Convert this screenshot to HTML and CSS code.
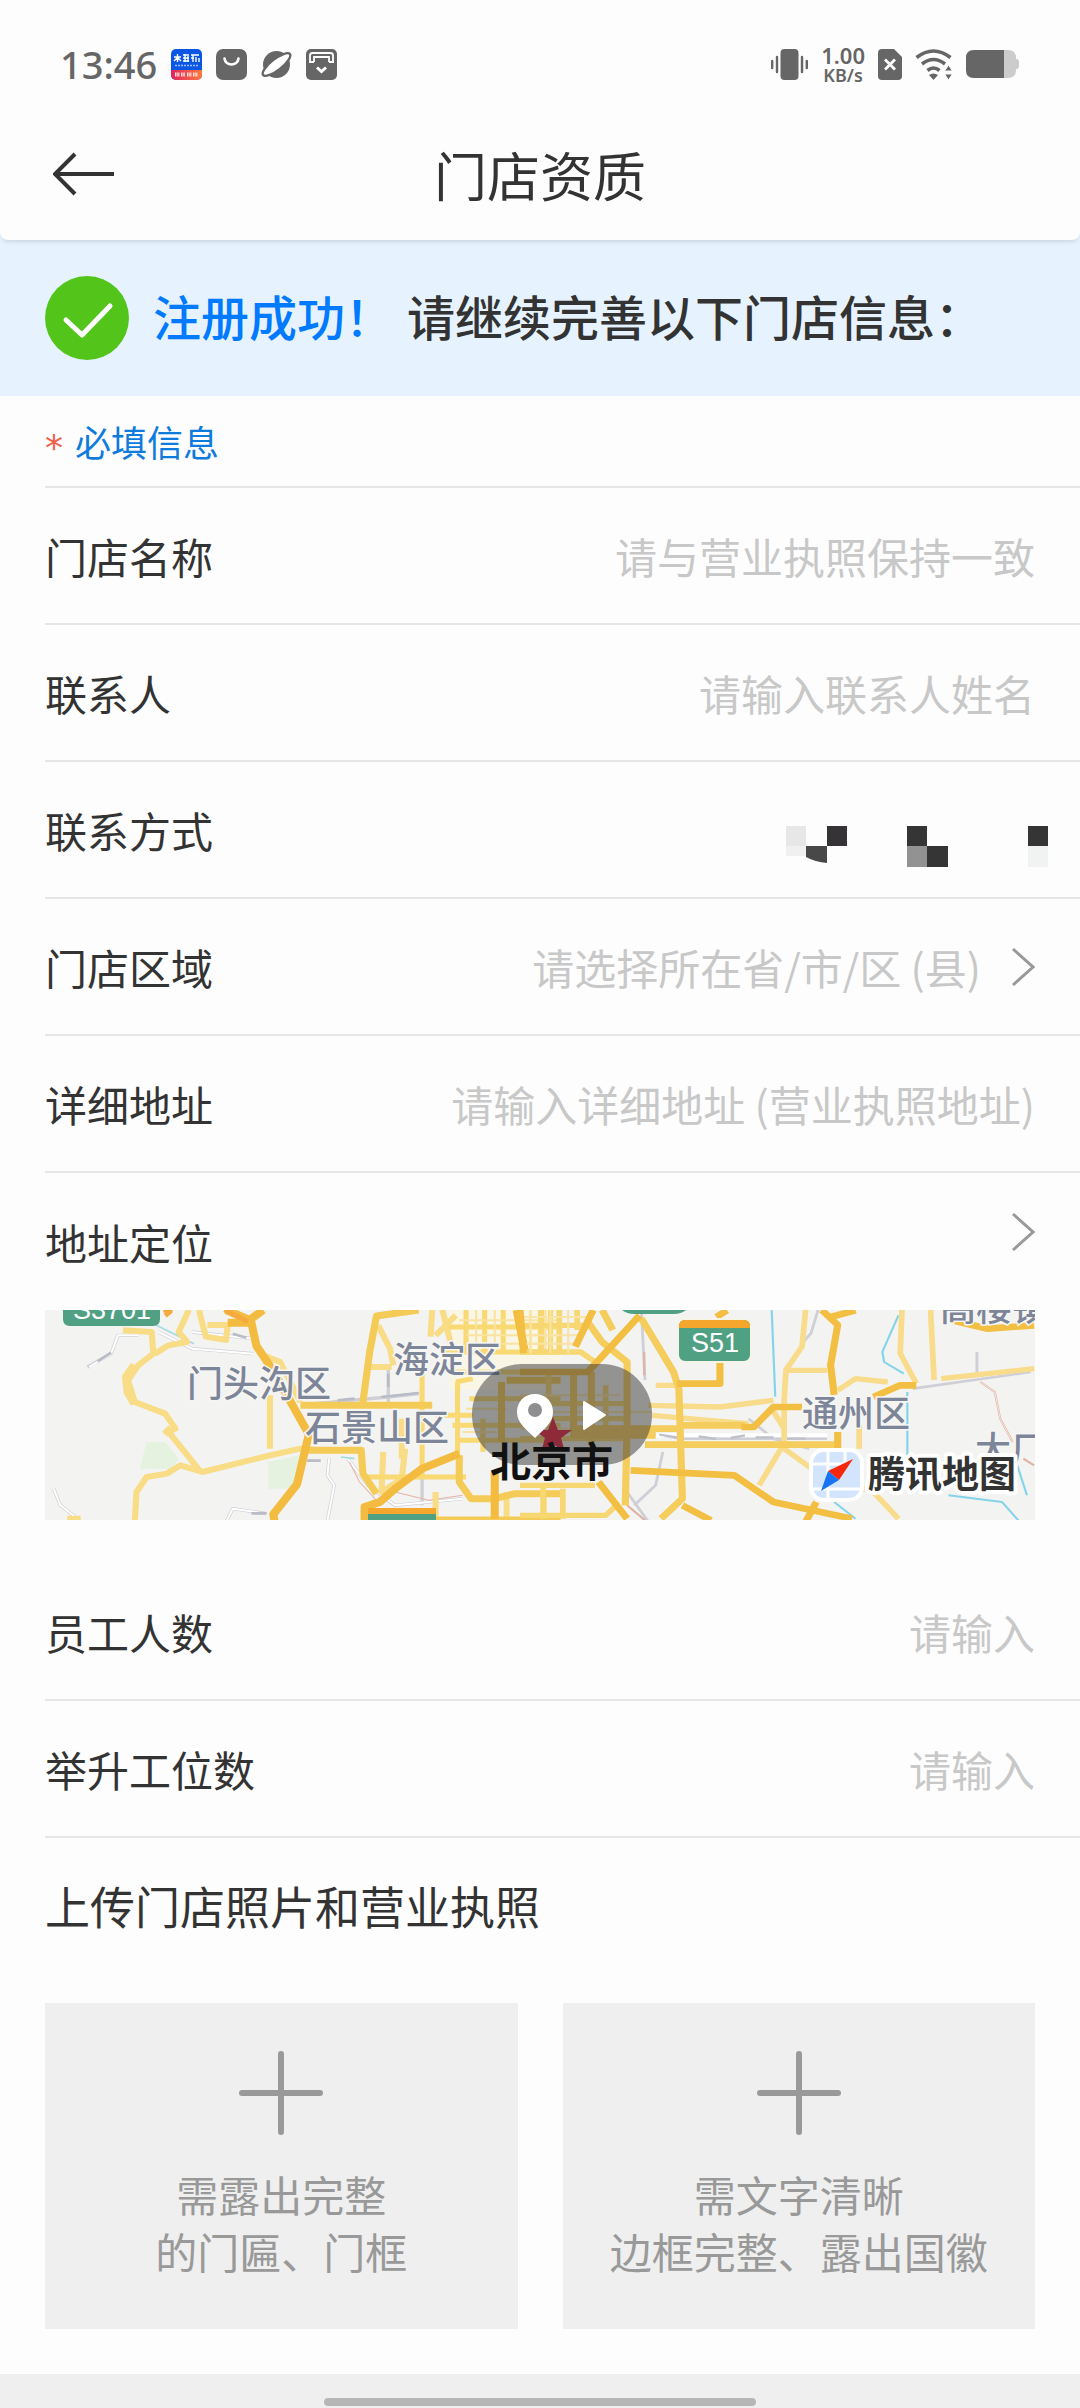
FILE: index.html
```html
<!DOCTYPE html>
<html lang="zh-CN">
<head>
  <meta charset="UTF-8">
  <meta name="viewport" content="width=device-width, initial-scale=1.0">
  <title>门店资质</title>
  <link rel="stylesheet" href="styles.css">
</head>
<body>
<div class="status-bar">
  <div class="status-left">
    <span class="time">13:46</span>
    <svg width="31" height="31" viewBox="0 0 31 31">
      <defs>
        <linearGradient id="appRed" x1="0" x2="1"><stop offset="0" stop-color="#e0245e"/><stop offset="1" stop-color="#ff7a3c"/></linearGradient>
        <clipPath id="appClip"><rect width="31" height="31" rx="5"/></clipPath>
      </defs>
      <g clip-path="url(#appClip)">
        <rect width="31" height="31" fill="#0b57e3"/>
        <rect y="21" width="31" height="10" fill="url(#appRed)"/>
      </g>
      <path d="M3 8h7M6.500 5v8M6 9l-3 3M7 9l3 3M12 6h6M12 9h6M12 12h6M14 5v8M17 7v6M20 6h8M20 9h3M25 8v5M22 6v7M28 9v4" stroke="#fff" stroke-width="1.400" fill="none"/>
      <path d="M4 16.500h23" stroke="#9cc0ff" stroke-width="1.500" stroke-dasharray="2 1"/>
      <path d="M4 25.500h5M10 25.500h4M16 25.500h5M22 25.500h5" stroke="#ffe1dc" stroke-width="4" stroke-dasharray="1.500 .8"/>
    </svg>
    <svg width="31" height="31" viewBox="0 0 31 31">
      <rect width="31" height="31" rx="7" fill="#666"/>
      <path d="M8.500 9.500c1 8 13 8 14 0" fill="none" stroke="#fff" stroke-width="2.600" stroke-linecap="round"/>
    </svg>
    <svg width="31" height="31" viewBox="0 0 31 31">
      <circle cx="15.500" cy="15.500" r="13.500" fill="#666"/>
      <ellipse cx="15.500" cy="15.500" rx="17" ry="5.500" transform="rotate(-38 15.500 15.500)" fill="#fff" stroke="#666" stroke-width="2.400"/>
    </svg>
    <svg width="31" height="31" viewBox="0 0 31 31">
      <rect width="31" height="31" rx="5" fill="#666"/>
      <path d="M4 13V6.500Q4 4 6.500 4h18Q27 4 27 6.500V13M8 13V8h15v5M3 13h5M23 13h5" fill="none" stroke="#fff" stroke-width="1.800"/>
      <path d="M11 18.500l4.500 4 4.500-4" fill="none" stroke="#fff" stroke-width="3"/>
    </svg>
  </div>
  <div class="status-right">
    <svg width="37" height="31" viewBox="0 0 37 31">
      <rect x="9.500" width="18" height="31" rx="4" fill="#666"/>
      <path d="M1.200 12v7M6 8v15M31 8v15M35.800 12v7" stroke="#666" stroke-width="2.400" stroke-linecap="round"/>
    </svg>
    <div class="speed"><b>1.00</b><span>KB/s</span></div>
    <svg width="24" height="31" viewBox="0 0 24 31">
      <path d="M4 0h12l8 8v19q0 4-4 4H4q-4 0-4-4V4q0-4 4-4z" fill="#666"/>
      <path d="M7 10.500l10 10M17 10.500l-10 10" stroke="#fff" stroke-width="2.800"/>
    </svg>
    <svg width="38" height="31" viewBox="0 0 38 31">
      <path d="M1.500 8.500q17-13 34 0M7 15q11.500-9 23 0M12.500 21.500q6-5 12 0" fill="none" stroke="#666" stroke-width="3.600"/>
      <path d="M14 26q4.500-3 9 0l-4.500 5z" fill="#666"/>
      <path d="M33.500 16l4 6h-8zM33.500 31l4-6h-8z" fill="#666" stroke="#fdfdfd" stroke-width="1"/>
    </svg>
    <svg width="54" height="28" viewBox="0 0 54 28">
      <path d="M8 0h34q8 0 8 8v1q3 0 3 3v4q0 3-3 3v1q0 8-8 8H8q-8 0-8-8V8q0-8 8-8z" fill="#ccc"/>
      <path d="M8 0h30v28H8q-8 0-8-8V8q0-8 8-8z" fill="#666"/>
    </svg>
  </div>
</div>

<header class="nav">
  <button type="button" class="back" aria-label="返回">
    <svg width="62" height="44" viewBox="0 0 62 44"><path d="M22 2L2 22l20 20M2 22h59" fill="none" stroke="#333" stroke-width="4"/></svg>
  </button>
  <h1>门店资质</h1>
</header>

<div class="banner">
  <svg width="84" height="84" viewBox="0 0 84 84">
    <circle cx="42" cy="42" r="42" fill="#52c41a"/>
    <path d="M21 44l16 15 28-29" fill="none" stroke="#fff" stroke-width="5" stroke-linecap="round" stroke-linejoin="round"/>
  </svg>
  <p><strong>注册成功！</strong><span>请继续完善以下门店信息：</span></p>
</div>

<form class="store-form">
  <p class="required"><span>*</span>必填信息</p>
  <div class="row">
    <label for="storeName">门店名称</label>
    <input type="text" id="storeName" name="storeName" placeholder="请与营业执照保持一致">
  </div>
  <div class="row">
    <label for="contact">联系人</label>
    <input type="text" id="contact" name="contact" placeholder="请输入联系人姓名">
  </div>
  <div class="row row-phone">
    <span>联系方式</span>
    <!-- masked phone number -->
    <svg width="262" height="74" viewBox="0 0 262 74" role="img" aria-label="手机号已隐藏">
      <rect y="33" width="20" height="20" fill="#e7e7e7"/>
      <rect y="53" width="20" height="10" fill="#f0f0f0"/>
      <path d="M20 53h21v17q-12-1-21-6z" fill="#484848"/>
      <rect x="41" y="33" width="20" height="20" fill="#353335"/>
      <rect x="121" y="33" width="20" height="20" fill="#353535"/>
      <rect x="121" y="53" width="20" height="21" fill="#929292"/>
      <rect x="141" y="53" width="21" height="21" fill="#353535"/>
      <rect x="242" y="33" width="20" height="20" fill="#353535"/>
      <rect x="242" y="53" width="20" height="21" fill="#f0f3f2"/>
    </svg>
  </div>
  <div class="row">
    <label for="region">门店区域</label>
    <select id="region" name="region">
      <option value="">请选择所在省/市/区 (县)</option>
    </select>
    <svg class="arrow" width="24" height="40" viewBox="0 0 24 40"><path d="M2 2l20 18L2 38" fill="none" stroke="#999" stroke-width="3"/></svg>
  </div>
  <div class="row">
    <label for="address">详细地址</label>
    <input type="text" id="address" name="address" placeholder="请输入详细地址 (营业执照地址)">
  </div>
  <div class="row row-location">
    <span>地址定位</span>
    <button type="button" aria-label="选择定位">
      <svg width="24" height="40" viewBox="0 0 24 40"><path d="M2 2l20 18L2 38" fill="none" stroke="#999" stroke-width="3"/></svg>
    </button>
  </div>

  <div class="map">
    <svg viewBox="0 0 990 210" preserveAspectRatio="xMidYMid slice" role="img" aria-label="北京市地图">
      <rect width="990" height="210" fill="#f3f3f1"/>
      <!-- west side -->
      <g transform="translate(-15 -18) scale(.338 .3333)" fill="none" stroke-linejoin="round">
        <path d="M325 530L345 450 400 450 440 500 420 530zM705 590V510L800 490 780 590z" fill="#e5f2df"/>
        <path d="M1240 54h330v240h-330z" fill="#faf6e6"/>
        <path d="M170 225L240 185 260 130 320 130M380 120L480 170 660 185M480 120l180 20M70 590l20 50 50 40M580 690l20-40 100 15M885 500l-5 50 20 30-20 105M840 335l220-20 90-10M1060 230v100M940 500l60 80 80 60 200-20M1160 560v80" stroke="#cfcfd6" stroke-width="10"/>
        <path d="M175 225L240 185 260 130 320 130M380 120L480 170 660 185M480 120l180 20M70 590l20 50 50 40M580 690l20-40 100 15M885 500l-5 50 20 30-20 105M940 500l60 80 80 60 200-20" stroke="#fff" stroke-width="6"/>
        <path d="M200 208l40-26M600 125l40 12M910 325l50-5M1040 315l110-12M655 664h45M1060 245v40M820 506h40" stroke="#b9bcc6" stroke-width="8"/>
        <path d="M945 510l30 60 50 55M1080 600l100 25 100-15" stroke="#e5b3a8" stroke-width="3"/>
        <path d="M920 495l40 5M365 95l120 60" stroke="#a4dbe0" stroke-width="5"/>
        <path d="M275 115L360 120 365 185 320 220 290 265 310 330 400 365 430 410 410 420 505 540M370 185L410 160 465 150 440 120 470 54M500 54l20 80 60 10 5-45h-60M310 690l5-90 30-45 60-10 40-25 65 20 200-50 90-20 60 5M710 310v160M690 190l50 20 60 120M1030 100l35 70 10 50M990 225h80M1045 480l-5 120 60-40 10-90M1100 380v120M1190 54l-5 80M1220 54l30 120M1200 130l60-60M1520 600v90M1200 600v90M1410 600v90M110 680h40" stroke="#f9dc86" stroke-width="18"/>
        <path d="M310 220l-25 35 5 45 20 35M400 410l15 15" stroke="#f9dc86" stroke-width="26"/>
        <path d="M1240 105h330M1220 180h350M1240 240h330M1250 400h320M1260 445h310M1290 54v130M1345 54v130M1400 54v130M1510 54v130M1540 54v130M1265 270v220M1310 260l-50 10M1340 380v100M1000 555h290M1160 230v330M1300 320h270M1200 370h110" stroke="#f8d972" stroke-width="15"/>
        <path d="M1270 85h300M1290 130h280M1290 155h280M1320 54v130M1375 54v130M1480 54v130M1525 54v130M1280 420h100M1290 350h120" stroke="#f9e3a0" stroke-width="6"/>
        <path d="M1150 54L1025 72 1005 180 985 330M800 340h390M820 475h160l5 70 40 60M1270 490v80l35 50h70l60-15h135M980 684h590M1395 270v180M1570 265h-160" stroke="#f5cb57" stroke-width="21"/>
        <path d="M580 54l70 30 40-30M585 92h70l15 70 50 75 105 190-35 150-70 90 5 30M1270 485l-110 45-80 60-45 40-45 15v45M1440 54l25 130M1375 540v140" stroke="#f3bc40" stroke-width="24"/>
        <path d="M395 54l20 5-15 12M575 54l70 35" stroke="#f6a93c" stroke-width="14"/>
      </g>
      <!-- east side -->
      <g transform="translate(475 -18) scale(.357 .3333)" fill="none" stroke-linejoin="round">
        <path d="M340 54l10 210M835 54l-20 70-25 30M370 425l80 15h410M320 640l60-60 20-100M300 600l60 90M1280 180v60M1100 290l330-50M640 380l70 60 100 30" stroke="#cfcfd8" stroke-width="8"/>
        <path d="M380 430h480" stroke="#fff" stroke-width="12"/>
        <path d="M390 428l50 8M500 433l50 8M590 438l40-8M660 436h50M740 440h60" stroke="#bec1ca" stroke-width="7"/>
        <path d="M348 180v70M1290 270l40 30 15 80 35 70M300 640l50 45M1410 500l30 20" stroke="#dfb2a5" stroke-width="6"/>
        <path d="M1290 270l40 30 15 80 35 70" stroke="#fff" stroke-width="2"/>
        <path d="M705 54l10 260M1060 70l-45 110 5 30 55 35M1085 300v190M1200 610l150 20 50 60M880 630l60 50M1390 510l30 100" stroke="#83d4ea" stroke-width="6"/>
        <path d="M800 54l-10 110-45 70-5 90v130L670 580M750 235h110M1070 54l-5 130 45 90M1150 54l10 210M1180 260l260-30M890 295l50-35 90 10M360 340l200 5 150-20M380 280h60M370 370l160 15 110 10M740 470l90 70 160 60 70 80M950 400v70M705 350l35 60" stroke="#f8dc8b" stroke-width="16"/>
        <path d="M0 100h180M0 180h170l40 30M0 240h200M0 380h300M0 440h300M60 54v130M110 54v130M160 54v60M80 240v200M240 280v160M0 580h210M0 670h240l30-30M65 580v100M120 590v90M0 335h300" stroke="#f7d772" stroke-width="16"/>
        <path d="M0 75h190M0 130h180M0 155h170M30 54v130M85 54v130M135 54v130M0 410h270M0 310h280M0 360h370" stroke="#f9e4a5" stroke-width="6"/>
        <path d="M190 90l40 60 70 60v190l-5 240M230 54l30 60M340 80l90 160 15 50 10 330-60 60M160 410h290M200 240v220M350 458h540M150 240v190h230M450 400h180" stroke="#f5cd5c" stroke-width="20"/>
        <path d="M0 240h190L335 70M205 54l-50 110M0 54l10 130M220 570l80 110M310 535l290 15 110 80 220 50M800 690l30-60M440 275h120v-80M550 75l30-20M620 405h35l55-60h80M455 640l80 45M845 54l45 45-20 120 10 90M890 420v50M870 75l70-20M990 315l75-35h45M1210 85l100 25 130-10" stroke="#f3bf43" stroke-width="20"/>
      </g>

      <path d="M18 0h97v9q0 7-7 7H25q-7 0-7-7z" fill="#50a184"/>
      <text x="28" y="9" class="road-no">S3701</text>
      <path d="M577 0h64q-5 4-12 4h-40q-7 0-12-4z" fill="#50a184"/>
      <path d="M323 198h68v12h-68z" fill="#50a184"/>
      <path d="M323 198h68v6h-68z" fill="#f5a62d"/>
      <rect x="633" y="9" width="73" height="43" rx="7" fill="#50a184" stroke="#f6f4e6" stroke-width="2"/>
      <path d="M634 18v-2q0-6 6-6h59q6 0 6 6v2z" fill="#f5a62d"/>
      <text x="646" y="42" class="road-no">S51</text>

      <text x="142" y="87" class="district">门头沟区</text>
      <text x="348" y="63" class="district">海淀区</text>
      <text x="260" y="131" class="district">石景山区</text>
      <text x="757" y="117" class="district">通州区</text>
      <text x="895" y="11" class="district">高楼镇</text>
      <text x="930" y="153" class="district">大厂</text>

      <path d="M508 107l5 13h14l-11 8 4 14-12-8-12 8 4-14-11-8h14z" fill="#e8213f"/>
      <rect x="427" y="54" width="180" height="101" rx="50" fill="#333" fill-opacity=".5"/>
      <path d="M490 84c-11 0-18 8-18 18 0 11 9 17 18 26 9-9 18-15 18-26 0-10-7-18-18-18z" fill="#fff"/>
      <circle cx="490" cy="100" r="7" fill="#8e8e90"/>
      <path d="M539 92l21 13-21 14z" fill="#fff" stroke="#fff" stroke-width="2" stroke-linejoin="round"/>
      <text x="445" y="167" class="city">北京市</text>

      <rect x="766" y="140" width="51" height="50" rx="13" fill="#d3e5fd" stroke="#fff" stroke-width="4"/>
      <path d="M783 142v46M768 154h32M768 179h47M800 142v12" stroke="#fff" stroke-width="3"/>
      <path d="M808 149l-14 21-11-9z" fill="#f5260c"/>
      <path d="M776 181l7-20 11 9z" fill="#1674f5"/>
      <text x="823" y="178" class="brand">腾讯地图</text>
    </svg>
  </div>

  <div class="row">
    <label for="staff">员工人数</label>
    <input type="text" id="staff" name="staff" placeholder="请输入">
  </div>
  <div class="row">
    <label for="lifts">举升工位数</label>
    <input type="text" id="lifts" name="lifts" placeholder="请输入">
  </div>

  <h2>上传门店照片和营业执照</h2>
  <div class="uploads">
    <button type="button">
      <svg width="84" height="84" viewBox="0 0 84 84"><path d="M42 3v78M3 42h78" stroke="#999" stroke-width="6" stroke-linecap="round"/></svg>
      <span>需露出完整<br>的门匾、门框</span>
    </button>
    <button type="button">
      <svg width="84" height="84" viewBox="0 0 84 84"><path d="M42 3v78M3 42h78" stroke="#999" stroke-width="6" stroke-linecap="round"/></svg>
      <span>需文字清晰<br>边框完整、露出国徽</span>
    </button>
  </div>
</form>

<div class="home-bar"><span></span></div>
</body>
</html>
```
FILE: styles.css
```css
* {
  box-sizing: border-box;
}

body {
  display: flex;
  flex-direction: column;
  min-height: 100vh;
  margin: 0;
  background-color: #fdfdfd;
  color: #333;
  font-family: "Noto Sans CJK SC", sans-serif;
  font-size: 42px;
}

svg {
  display: block;
  flex-shrink: 0;
}

button, input, select {
  padding: 0;
  border: none;
  background: none;
  font-family: inherit;
  font-size: inherit;
  color: inherit;
}

button {
  cursor: pointer;
}

/* status bar */
.status-bar {
  display: flex;
  justify-content: space-between;
  align-items: center;
  height: 108px;
  padding: 20px 60px 0;
  color: #666;
  font-family: "Noto Sans", sans-serif;
}

.status-left {
  display: flex;
  align-items: center;
  gap: 14px;
}

.time {
  font-size: 38px;
  font-weight: 500;
  line-height: 40px;
}

.status-right {
  display: flex;
  align-items: center;
  gap: 13px;
}

.speed {
  display: flex;
  flex-direction: column;
  align-items: center;
  font-size: 18px;
  font-weight: 600;
  line-height: 18px;
}

.speed b {
  font-size: 22px;
  font-weight: 600;
  line-height: 22px;
}

/* title bar */
.nav {
  display: grid;
  grid-template-columns: 1fr auto 1fr;
  align-items: center;
  height: 132px;
  padding: 0 53px;
  background-color: #fdfdfd;
  border-radius: 0 0 8px 8px;
  box-shadow: 0 4px 4px -2px rgba(0, 0, 0, 0.12);
  z-index: 1;
}

.back {
  justify-self: start;
}

h1 {
  margin: 0;
  font-size: 53px;
  font-weight: 400;
  line-height: 80px;
}

.banner {
  display: flex;
  align-items: center;
  gap: 24px;
  height: 164px;
  margin-top: -8px;
  padding: 8px 45px 0;
  background-color: #e6f3ff;
}

.banner p {
  display: flex;
  gap: 14px;
  margin: 0;
  padding-bottom: 6px;
  font-size: 48px;
  font-weight: 500;
  line-height: 72px;
}

.banner strong {
  color: #007aff;
  font-weight: 500;
}

/* form */
.required {
  display: flex;
  align-items: center;
  height: 92px;
  margin: 0 0 0 45px;
  border-bottom: 2px solid #e6e6e6;
  color: #0f7bdc;
  font-size: 36px;
}

.required span {
  width: 30px;
  padding-top: 12px;
  color: #f0604d;
  font-family: "DejaVu Sans", sans-serif;
}

.row {
  display: flex;
  align-items: center;
  height: 137px;
  margin-left: 45px;
  padding-right: 45px;
  border-bottom: 2px solid #e6e6e6;
}

.row input, .row select {
  flex: 1;
  min-width: 0;
  height: 64px;
  outline: none;
  text-align: right;
}

.row input::placeholder {
  color: #c8c8c8;
  opacity: 1;
}

.row select {
  appearance: none;
  color: #c8c8c8;
  text-align-last: right;
}

.arrow {
  margin-left: 30px;
}

.row-phone {
  justify-content: space-between;
  padding-right: 32px;
}

.row-location {
  justify-content: space-between;
  border-bottom: none;
}

.row-location button {
  padding-bottom: 20px;
}

.map {
  margin: 0 45px 44px;
}

.map svg {
  width: 100%;
  height: 210px;
}

.road-no {
  fill: #fff;
  font-family: "Liberation Sans", sans-serif;
  font-size: 27px;
}

.district {
  fill: #7d8598;
  stroke: #f6f6f4;
  stroke-width: 3px;
  paint-order: stroke;
  font-size: 36px;
  font-weight: 500;
}

.city {
  fill: #111;
  font-size: 41px;
  font-weight: 700;
}

.brand {
  fill: #333;
  stroke: #fff;
  stroke-width: 8px;
  stroke-linejoin: round;
  paint-order: stroke;
  font-size: 37px;
  font-weight: 700;
}

h2 {
  margin: 34px 45px 63px;
  font-size: 45px;
  font-weight: 400;
  line-height: 68px;
}

.uploads {
  display: grid;
  grid-template-columns: 1fr 1fr;
  gap: 45px;
  margin: 0 45px 45px;
}

.uploads button {
  display: flex;
  flex-direction: column;
  align-items: center;
  gap: 30px;
  padding: 48px 0 50px;
  background-color: #efefef;
  color: #999;
  line-height: 57px;
}

/* gesture area */
.home-bar {
  display: flex;
  justify-content: center;
  align-items: flex-end;
  height: 35px;
  margin-top: auto;
  padding-bottom: 3px;
  background-color: #efefef;
}

.home-bar span {
  width: 40%;
  height: 8px;
  border-radius: 4px;
  background-color: #b6b6b6;
}
```
